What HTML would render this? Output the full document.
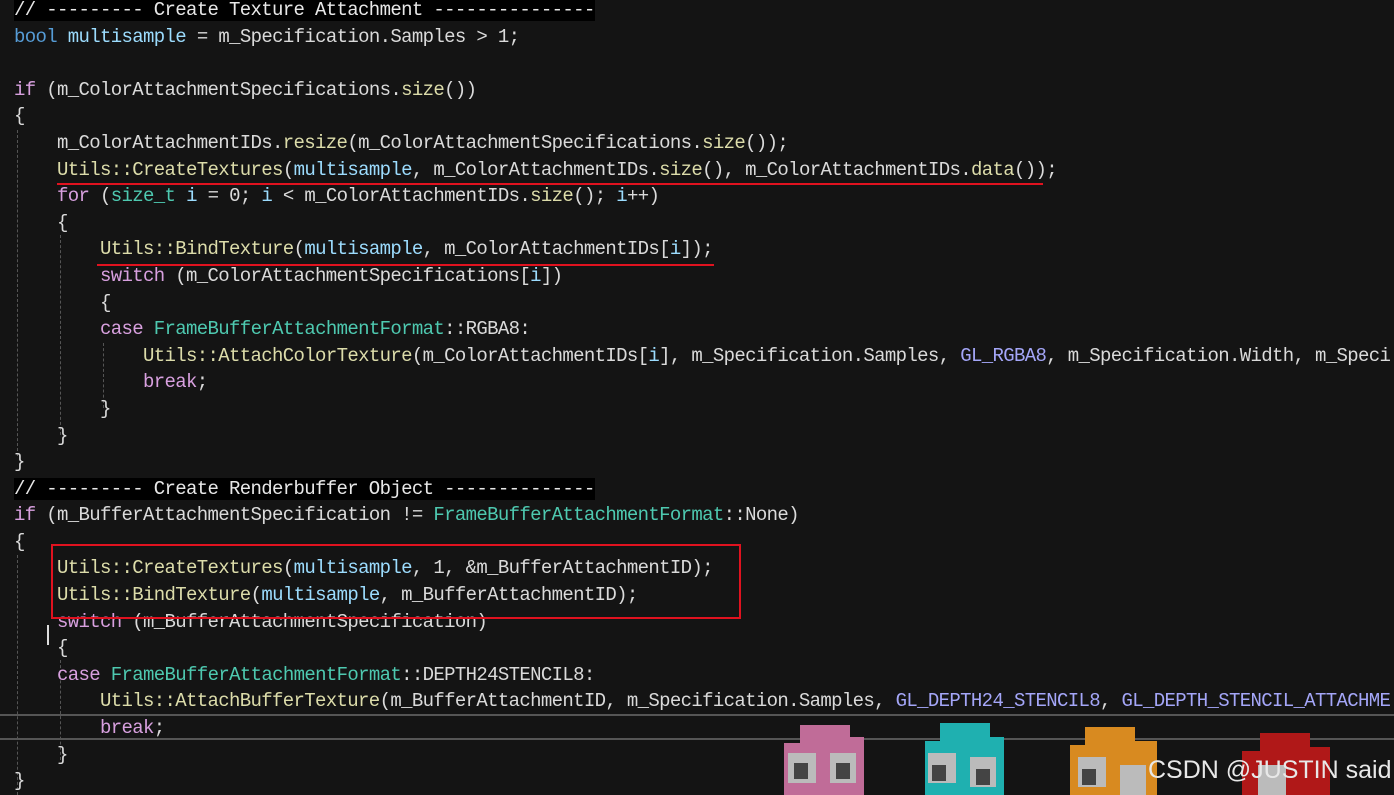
<!DOCTYPE html>
<html><head><meta charset="utf-8"><style>
html,body{margin:0;padding:0;}
body{width:1394px;height:795px;background:#141414;position:relative;overflow:hidden;}
.wrap{position:absolute;left:0;top:0;width:1394px;height:795px;overflow:hidden;z-index:2}
pre{position:absolute;left:14px;top:-3px;margin:0;font-family:"Liberation Mono",monospace;font-size:19px;letter-spacing:-0.65px;line-height:26.6px;color:#dadada;white-space:pre;}
.k{color:#d8a0df}.b{color:#569cd6}.f{color:#dcdcaa}.v{color:#9cdcfe}.t{color:#4ec9b0}.m{color:#a4a6f8}
.c{background:#000;color:#e8e8e8}
.g{position:absolute;border-left:1px dashed #555;width:0;z-index:1}
.red{position:absolute;background:#e0121f;height:2px;z-index:3}
.hl{position:absolute;left:0;width:1394px;height:2px;background:#555;z-index:1}
.gh{position:absolute;z-index:1}
.wm{position:absolute;left:1148px;top:756px;font-family:"Liberation Sans",sans-serif;font-size:25px;color:#e8e8e8;z-index:4}
</style></head><body>
<div class="hl" style="top:714px"></div>
<div class="hl" style="top:738px"></div>
<svg class="gh" style="left:780px;top:715px" width="614" height="80">
<path d="M20 10h50v12h14v60H4V28h16z" fill="#c06c98"/>
<rect x="8" y="38" width="28" height="30" fill="#bbb"/><rect x="50" y="38" width="26" height="30" fill="#bbb"/>
<rect x="14" y="48" width="14" height="16" fill="#444"/><rect x="56" y="48" width="14" height="16" fill="#444"/>
<path d="M160 8h50v14h14v60H145V26h15z" fill="#1fb0b0"/>
<rect x="148" y="38" width="28" height="30" fill="#bbb"/><rect x="190" y="42" width="26" height="30" fill="#bbb"/>
<rect x="152" y="50" width="14" height="16" fill="#444"/><rect x="196" y="54" width="14" height="16" fill="#444"/>
<path d="M305 12h50v14h22v56H290V30h15z" fill="#d88a20"/>
<rect x="298" y="42" width="28" height="30" fill="#bbb"/><rect x="340" y="50" width="26" height="30" fill="#bbb"/>
<rect x="302" y="54" width="14" height="16" fill="#444"/>
<path d="M480 18h50v14h20v50H462V36h18z" fill="#b01818"/>
<rect x="478" y="50" width="28" height="30" fill="#bbb"/>
</svg>
<div class="g" style="left:17px;top:130px;height:326px"></div>
<div class="g" style="left:60px;top:235px;height:200px"></div>
<div class="g" style="left:103px;top:343px;height:65px"></div>
<div class="g" style="left:17px;top:555px;height:240px"></div>
<div class="g" style="left:60px;top:660px;height:100px"></div>
<div style="position:absolute;left:47px;top:625px;width:2px;height:20px;background:#ddd;z-index:3"></div>
<div class="wrap"><pre><span class="c">// --------- Create Texture Attachment ---------------</span>
<span class="b">bool</span> <span class="v">multisample</span> = m_Specification.Samples &gt; 1;

<span class="k">if</span> (m_ColorAttachmentSpecifications.<span class="f">size</span>())
{
    m_ColorAttachmentIDs.<span class="f">resize</span>(m_ColorAttachmentSpecifications.<span class="f">size</span>());
    <span class="f">Utils::CreateTextures</span>(<span class="v">multisample</span>, m_ColorAttachmentIDs.<span class="f">size</span>(), m_ColorAttachmentIDs.<span class="f">data</span>());
    <span class="k">for</span> (<span class="t">size_t</span> <span class="v">i</span> = 0; <span class="v">i</span> &lt; m_ColorAttachmentIDs.<span class="f">size</span>(); <span class="v">i</span>++)
    {
        <span class="f">Utils::BindTexture</span>(<span class="v">multisample</span>, m_ColorAttachmentIDs[<span class="v">i</span>]);
        <span class="k">switch</span> (m_ColorAttachmentSpecifications[<span class="v">i</span>])
        {
        <span class="k">case</span> <span class="t">FrameBufferAttachmentFormat</span>::RGBA8:
            <span class="f">Utils::AttachColorTexture</span>(m_ColorAttachmentIDs[<span class="v">i</span>], m_Specification.Samples, <span class="m">GL_RGBA8</span>, m_Specification.Width, m_Speci
            <span class="k">break</span>;
        }
    }
}
<span class="c">// --------- Create Renderbuffer Object --------------</span>
<span class="k">if</span> (m_BufferAttachmentSpecification != <span class="t">FrameBufferAttachmentFormat</span>::None)
{
    <span class="f">Utils::CreateTextures</span>(<span class="v">multisample</span>, 1, &amp;m_BufferAttachmentID);
    <span class="f">Utils::BindTexture</span>(<span class="v">multisample</span>, m_BufferAttachmentID);
    <span class="k">switch</span> (m_BufferAttachmentSpecification)
    {
    <span class="k">case</span> <span class="t">FrameBufferAttachmentFormat</span>::DEPTH24STENCIL8:
        <span class="f">Utils::AttachBufferTexture</span>(m_BufferAttachmentID, m_Specification.Samples, <span class="m">GL_DEPTH24_STENCIL8</span>, <span class="m">GL_DEPTH_STENCIL_ATTACHME</span>
        <span class="k">break</span>;
    }
}</pre></div>
<div class="red" style="left:57px;top:183px;width:986px"></div>
<div class="red" style="left:97px;top:264px;width:617px"></div>
<div style="position:absolute;left:51px;top:544px;width:686px;height:71px;border:2px solid #e0121f;z-index:3"></div>
<div class="wm">CSDN @JUSTIN said</div>
</body></html>
